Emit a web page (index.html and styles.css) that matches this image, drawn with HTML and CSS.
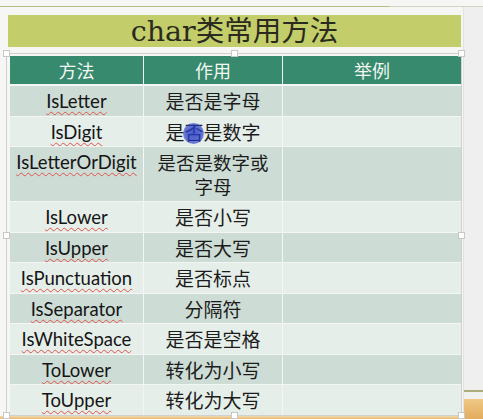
FILE: index.html
```html
<!DOCTYPE html>
<html lang="zh">
<head>
<meta charset="utf-8">
<title>char类常用方法</title>
<link rel="stylesheet" href="styles.css">
</head>
<body>
<div class="page">
  <div class="topline"></div>
  <div class="content">
    <div class="main">
      <div class="title">char类常用方法</div>
      <div class="frame">
        <div class="grid">
          <div class="th">方法</div><div class="th">作用</div><div class="th">举例</div>

          <div class="td en dark"><span class="sp">IsLetter</span></div><div class="td dark">是否是字母</div><div class="td dark"></div>
          <div class="td en light"><span class="sp">IsDigit</span></div><div class="td light cursor-cell"><span class="txt">是否是数字<span class="blob"></span></span></div><div class="td light"></div>
          <div class="td en dark top"><span class="sp">IsLetterOrDigit</span></div><div class="td dark top two">是否是数字或<br>字母</div><div class="td dark"></div>
          <div class="td en light"><span class="sp">IsLower</span></div><div class="td light">是否小写</div><div class="td light"></div>
          <div class="td en dark"><span class="sp">IsUpper</span></div><div class="td dark">是否大写</div><div class="td dark"></div>
          <div class="td en light"><span class="sp">IsPunctuation</span></div><div class="td light">是否标点</div><div class="td light"></div>
          <div class="td en dark"><span class="sp">IsSeparator</span></div><div class="td dark">分隔符</div><div class="td dark"></div>
          <div class="td en light"><span class="sp">IsWhiteSpace</span></div><div class="td light">是否是空格</div><div class="td light"></div>
          <div class="td en dark"><span class="sp">ToLower</span></div><div class="td dark">转化为小写</div><div class="td dark"></div>
          <div class="td en light"><span class="sp">ToUpper</span></div><div class="td light">转化为大写</div><div class="td light"></div>
        </div>
        <span class="handle h-tl"></span>
        <span class="handle h-tm"></span>
        <span class="handle h-tr"></span>
        <span class="handle h-ml"></span>
        <span class="handle h-mr"></span>
        <span class="handle h-bl"></span>
        <span class="handle h-bm"></span>
        <span class="handle h-br"></span>
      </div>
      <div class="bottom-band"></div>
    </div>
    <div class="side">
      <div class="side-fill"></div>
      <div class="side-line"></div>
      <div class="side-gap"></div>
      <div class="side-tan"></div>
    </div>
  </div>
</div>
</body>
</html>
```

FILE: styles.css
```css
html, body {
  margin: 0;
  padding: 0;
}
body {
  background: #f6f6f4;
  width: 483px;
  height: 419px;
  overflow: hidden;
  font-family: "Noto Sans CJK SC", sans-serif;
}
.page {
  display: flex;
  flex-direction: column;
  height: 419px;
}
.topline {
  margin-top: 6px;
  height: 1px;
  background: linear-gradient(to right, #b8bc86 0, #b8bc86 390px, #d2d4bd 390px);
  flex: none;
}
.content {
  display: flex;
  flex: 1;
}
.main {
  width: 463px;
  flex: none;
  display: flex;
  flex-direction: column;
  padding-left: 6px;
  box-sizing: border-box;
}
.title {
  margin: 8px 0 0 2px;
  width: 453px;
  height: 32px;
  background: #c3ce6a;
  text-align: center;
  font-family: "DejaVu Serif", "Noto Sans CJK SC", serif;
  font-size: 28.5px;
  line-height: 33px;
  color: #2a2a1e;
}
.frame {
  position: relative;
  margin-top: 6px;
  width: 456px;
  height: 363px;
  box-sizing: border-box;
  border: 1px solid #cfd0cf;
  padding: 2px 0 0 3px;
}
.grid {
  display: grid;
  grid-template-columns: 133px 138px 178px;
  grid-template-rows: 29px 30px 29px 54px 30px 29px 30px 29px 30px 29px 30px;
  gap: 1px;
  width: 451px;
  background: #f3f6f4;
}
.th {
  height: 28px;
  background: #378a6e;
  color: #f4f7f2;
  font-size: 18px;
  line-height: 28px;
  text-align: center;
}
.td {
  display: flex;
  align-items: center;
  justify-content: center;
  text-align: center;
  font-size: 19px;
  line-height: 24px;
  color: #1c1c1c;
}
.td.top { align-items: flex-start; padding-top: 3px; }
.td.two { line-height: 24px; font-size: 18.5px; }
.dark { background: #cddcd5; }
.light { background: #e6eeea; }
.td.en {
  font-family: "Lato", "Open Sans", sans-serif;
  font-size: 18.5px;
  color: #151515;
}
.sp {
  text-decoration: underline wavy #e0534f;
  text-decoration-thickness: 1px;
  text-underline-offset: 3px;
  text-decoration-skip-ink: none;
}
.txt {
  position: relative;
}
.blob {
  position: absolute;
  left: 18px;
  top: 3px;
  width: 21px;
  height: 21px;
  border-radius: 50%;
  background: radial-gradient(circle, rgba(40,60,200,0.85) 0, rgba(40,60,200,0.7) 55%, rgba(40,60,200,0.35) 100%);
}
.handle {
  position: absolute;
  width: 5px;
  height: 5px;
  background: #ffffff;
  border: 1px solid #c8c8c8;
}
.h-tl { left: -4px; top: -4px; }
.h-tm { left: 224px; top: -4px; }
.h-tr { right: -4px; top: -4px; }
.h-ml { left: -4px; top: 178px; }
.h-mr { right: -4px; top: 178px; }
.h-bl { left: -4px; bottom: -4px; }
.h-bm { left: 224px; bottom: -4px; }
.h-br { right: -4px; bottom: -4px; }
.bottom-band {
  flex: 1;
  margin-left: -6px;
  background: linear-gradient(to bottom, #f2dcb0, #e6b46a);
}
.side {
  flex: 1;
  display: flex;
  flex-direction: column;
  background: #efefef;
  border-left: 1px solid #e2e2e2;
}
.side-fill { flex: 1; }
.side-line { height: 2px; background: #a9ad78; }
.side-gap { height: 7px; background: #f0f0ee; }
.side-tan { height: 20px; background: linear-gradient(to bottom, #f0c985, #e2ac5e); }
```
